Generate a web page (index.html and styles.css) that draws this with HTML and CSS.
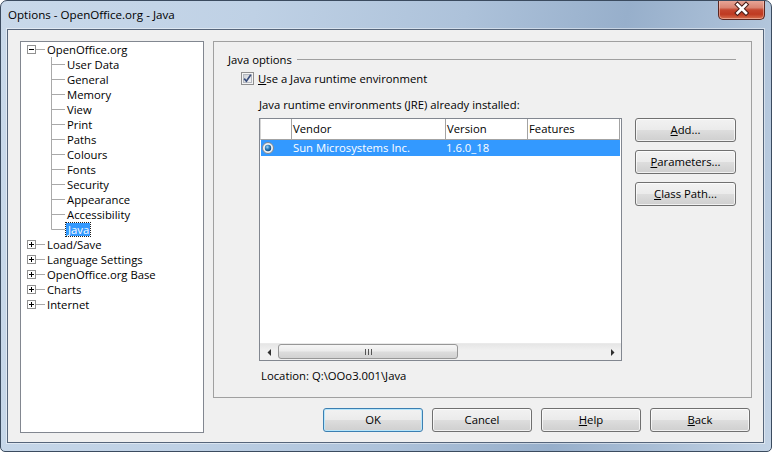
FILE: index.html
```html
<!DOCTYPE html>
<html lang="en">
<head>
<meta charset="UTF-8">
<title>Options - OpenOffice.org - Java</title>
<link rel="stylesheet" href="styles.css">
</head>
<body>

<div class="window">
    <div class="titlebar">
        <span class="title">Options - OpenOffice.org - Java</span>
        <div class="close">
            <svg width="45" height="18" viewBox="0 0 45 18">
                <path d="M18.5 4.5 L27 13 M27 4.5 L18.5 13" stroke="#4a1d18" stroke-width="4.6" stroke-linecap="square"/>
                <path d="M18.5 4.5 L27 13 M27 4.5 L18.5 13" stroke="#ffffff" stroke-width="2.6" stroke-linecap="square"/>
            </svg>
        </div>
    </div>

    <div class="client">
        <div class="tree">
            <!-- connector lines -->
            <svg class="tree-lines" width="182" height="390">
                <g stroke="#a9a9a9" stroke-width="1" fill="none">
                    <path d="M15 7.5 H24 M15 202.5 H24 M15 217.5 H24 M15 232.5 H24 M15 247.5 H24 M15 262.5 H24"/>
                    <path d="M30.5 15 V187.5"/>
                    <path d="M30.5 22.5 H44 M30.5 37.5 H44 M30.5 52.5 H44 M30.5 67.5 H44 M30.5 82.5 H44 M30.5 97.5 H44 M30.5 112.5 H44 M30.5 127.5 H44 M30.5 142.5 H44 M30.5 157.5 H44 M30.5 172.5 H44 M30.5 187.5 H44"/>
                </g>
            </svg>

            <div class="node top"><svg class="exp" width="9" height="9"><rect x=".5" y=".5" width="8" height="8" fill="#fff" stroke="#919191"/><path d="M2 4.5 H7" stroke="#000"/></svg><span>OpenOffice.org</span></div>
            <div class="node child">User Data</div>
            <div class="node child">General</div>
            <div class="node child">Memory</div>
            <div class="node child">View</div>
            <div class="node child">Print</div>
            <div class="node child">Paths</div>
            <div class="node child">Colours</div>
            <div class="node child">Fonts</div>
            <div class="node child">Security</div>
            <div class="node child">Appearance</div>
            <div class="node child">Accessibility</div>
            <div class="node child"><span class="selected">Java</span></div>
            <div class="node top"><svg class="exp" width="9" height="9"><rect x=".5" y=".5" width="8" height="8" fill="#fff" stroke="#919191"/><path d="M2 4.5 H7 M4.5 2 V7" stroke="#000"/></svg><span>Load/Save</span></div>
            <div class="node top"><svg class="exp" width="9" height="9"><rect x=".5" y=".5" width="8" height="8" fill="#fff" stroke="#919191"/><path d="M2 4.5 H7 M4.5 2 V7" stroke="#000"/></svg><span>Language Settings</span></div>
            <div class="node top"><svg class="exp" width="9" height="9"><rect x=".5" y=".5" width="8" height="8" fill="#fff" stroke="#919191"/><path d="M2 4.5 H7 M4.5 2 V7" stroke="#000"/></svg><span>OpenOffice.org Base</span></div>
            <div class="node top"><svg class="exp" width="9" height="9"><rect x=".5" y=".5" width="8" height="8" fill="#fff" stroke="#919191"/><path d="M2 4.5 H7 M4.5 2 V7" stroke="#000"/></svg><span>Charts</span></div>
            <div class="node top"><svg class="exp" width="9" height="9"><rect x=".5" y=".5" width="8" height="8" fill="#fff" stroke="#919191"/><path d="M2 4.5 H7 M4.5 2 V7" stroke="#000"/></svg><span>Internet</span></div>
        </div>

        <div class="main">
            <div class="page">
                <div class="group-head">
                    <span>Java options</span>
                    <div class="rule"></div>
                </div>

                <div class="check-row">
                    <svg width="13" height="13" viewBox="0 0 13 13">
                        <defs>
                            <linearGradient id="cbg" x1="0" y1="0" x2="1" y2="1">
                                <stop offset="0" stop-color="#cbcfd5"/>
                                <stop offset="1" stop-color="#f6f6f6"/>
                            </linearGradient>
                        </defs>
                        <rect x=".5" y=".5" width="12" height="12" fill="#f4f4f4" stroke="#8f8f8f"/>
                        <rect x="2.5" y="2.5" width="8" height="8" fill="url(#cbg)" stroke="#b4b8bf"/>
                        <path d="M3.2 6.6 L5.4 9.2 L9.8 2.8" stroke="#3b4f7d" stroke-width="1.7" fill="none"/>
                    </svg>
                    <span><u>U</u>se a Java runtime environment</span>
                </div>

                <div class="jre-label"><u>J</u>ava runtime environments (JRE) already installed:</div>

                <div class="jre-row">
                    <div class="jre-table">
                        <div class="thead">
                            <div class="th c1"></div>
                            <div class="th c2">Vendor</div>
                            <div class="th c3">Version</div>
                            <div class="th c4">Features</div>
                        </div>
                        <div class="tr sel">
                            <div class="td c1">
                                <svg width="12" height="12" viewBox="0 0 12 12">
                                    <defs>
                                        <radialGradient id="dot" cx=".4" cy=".35" r=".7">
                                            <stop offset="0" stop-color="#9fd6f7"/>
                                            <stop offset=".5" stop-color="#2b7fc0"/>
                                            <stop offset="1" stop-color="#0f3f6e"/>
                                        </radialGradient>
                                    </defs>
                                    <circle cx="6" cy="6" r="5.5" fill="#eef0f2" stroke="#7d8590"/>
                                    <circle cx="6" cy="6" r="3.2" fill="url(#dot)"/>
                                </svg>
                            </div>
                            <div class="td c2">Sun Microsystems Inc.</div>
                            <div class="td c3">1.6.0_18</div>
                            <div class="td c4"></div>
                        </div>
                        <div class="tbody-space"></div>
                        <div class="hscroll">
                            <div class="arrow"><svg width="4" height="7"><path d="M4 0 V7 L0.5 3.5 Z" fill="#303030"/></svg></div>
                            <div class="track">
                                <div class="thumb"><span class="grip"></span></div>
                            </div>
                            <div class="arrow"><svg width="4" height="7"><path d="M0 0 V7 L3.5 3.5 Z" fill="#303030"/></svg></div>
                        </div>
                    </div>

                    <div class="side-buttons">
                        <div class="btn"><u>A</u>dd...</div>
                        <div class="btn"><u>P</u>arameters...</div>
                        <div class="btn"><u>C</u>lass Path...</div>
                    </div>
                </div>

                <div class="location">Location: Q:\OOo3.001\Java</div>
            </div>

            <div class="buttons">
                <div class="btn default">OK</div>
                <div class="btn">Cancel</div>
                <div class="btn"><u>H</u>elp</div>
                <div class="btn"><u>B</u>ack</div>
            </div>
        </div>
    </div>
</div>

</body>
</html>
```

FILE: styles.css
```css
* {
    box-sizing: border-box;
}
body {
    margin: 0;
    font-family: "Open Sans", "Noto Sans", sans-serif;
    font-size: 11.3px;
    color: #000;
    background: #ffffff;
}
u {
    text-decoration: underline;
    text-underline-offset: 1px;
}

/* window frame */
.window {
    width: 772px;
    height: 452px;
    border: 1px solid #3b4b5f;
    border-radius: 7px 7px 5px 5px;
    background: linear-gradient(100deg, #c9d9ea 0%, #bfd1e5 30%, #adc2da 55%, #97afcb 74%, #a9bed6 86%, #c3d3e5 100%);
    display: flex;
    flex-direction: column;
    overflow: hidden;
}
.titlebar {
    height: 28px;
    display: flex;
    justify-content: space-between;
    align-items: flex-start;
}
.title {
    padding: 6px 0 0 7px;
    line-height: 16px;
    font-size: 11.6px;
}
.close {
    width: 47px;
    height: 20px;
    margin: -1px 6px 0 0;
    border: 1px solid #5a2620;
    border-top: none;
    border-radius: 0 0 5px 5px;
    background: linear-gradient(#e9a99b 0%, #d98472 40%, #c4462f 52%, #bf3a22 75%, #d7704f 100%);
    box-shadow: inset 0 0 0 1px rgba(255, 220, 210, 0.45);
}
.close svg {
    display: block;
}

.client {
    height: 414px;
    margin: 0 7px 8px 6px;
    border: 1px solid #56657a;
    box-shadow: 0 0 0 1px rgba(255, 255, 255, 0.45);
    background: #f0f0f0;
    padding: 11px 11px 9px 12px;
    display: flex;
    gap: 9px;
}

/* left tree */
.tree {
    width: 184px;
    background: #fff;
    border: 1px solid #828790;
    position: relative;
}
.tree-lines {
    position: absolute;
    top: 0;
    left: 0;
}
.node {
    height: 15px;
    line-height: 15px;
    display: flex;
    align-items: center;
    white-space: nowrap;
}
.node.top {
    padding-left: 6px;
}
.node.top .exp {
    margin-right: 11px;
    flex-shrink: 0;
}
.node.child {
    padding-left: 46px;
}
.selected {
    background: #3399ff;
    color: #fff;
    padding: 0 1px 0 2px;
    margin-left: -1px;
    line-height: 13px;
    outline: 1px dotted #202020;
}

/* right side */
.main {
    width: 539px;
    display: flex;
    flex-direction: column;
    gap: 10px;
}
.page {
    height: 357px;
    border: 1px solid #a0a0a0;
    padding: 10px 15px 0 14px;
    display: flex;
    flex-direction: column;
}
.group-head {
    display: flex;
    align-items: center;
    height: 15px;
    line-height: 15px;
}
.rule {
    flex: 1;
    height: 1px;
    background: #a0a0a0;
    margin-left: 5px;
}
.check-row {
    margin-top: 4px;
    height: 15px;
    line-height: 15px;
    padding-left: 13px;
    display: flex;
    align-items: center;
    gap: 4px;
}
.check-row svg {
    display: block;
}
.jre-label {
    margin-top: 11px;
    height: 15px;
    line-height: 15px;
    padding-left: 31px;
}
.jre-row {
    margin-top: 6px;
    padding-left: 31px;
    display: flex;
    gap: 13px;
}
.jre-table {
    width: 363px;
    height: 243px;
    border: 1px solid #828790;
    background: #fff;
    display: flex;
    flex-direction: column;
}
.thead {
    display: flex;
    height: 21px;
}
.th {
    border-right: 1px solid #a3a3a3;
    border-bottom: 1px solid #a3a3a3;
    line-height: 20px;
    padding-left: 1px;
    white-space: nowrap;
}
.th.c1 {
    border-left: 1px solid #d5d5d5;
}
.c1 { width: 32px; }
.c2 { width: 154px; }
.c3 { width: 82px; }
.c4 { width: 92px; }
.tr {
    display: flex;
    height: 16px;
    line-height: 16px;
    margin: 0 1px 0 1px;
}
.tr.sel {
    background: #3399ff;
    color: #fff;
}
.td {
    white-space: nowrap;
}
.td.c1 {
    width: 31px;
    padding-left: 1px;
    display: flex;
    align-items: center;
}
.td.c2 {
    padding-left: 1px;
}
.tbody-space {
    flex: 1;
}
.hscroll {
    height: 17px;
    display: flex;
    background: linear-gradient(#e6e6e6, #f0f0f0 40%, #f0f0f0);
    border-top: 1px solid #eaeaea;
}
.arrow {
    width: 17px;
    display: flex;
    align-items: center;
    justify-content: center;
}
.arrow svg {
    display: block;
}
.track {
    flex: 1;
    padding: 0 0 1px 1px;
}
.thumb {
    width: 180px;
    height: 15px;
    border: 1px solid #979797;
    border-radius: 3px;
    background: linear-gradient(#f6f6f6 0%, #ececec 45%, #dcdcdc 55%, #d2d2d2 100%);
    display: flex;
    align-items: center;
    justify-content: center;
}
.grip {
    width: 7px;
    height: 6px;
    background: linear-gradient(90deg, #555 0 1px, transparent 1px 3px, #555 3px 4px, transparent 4px 6px, #555 6px 7px);
}
.side-buttons {
    display: flex;
    flex-direction: column;
    gap: 8px;
}
.side-buttons .btn {
    width: 101px;
}
.location {
    margin-top: 7px;
    height: 15px;
    line-height: 15px;
    padding-left: 33px;
}

/* push buttons */
.btn {
    height: 24px;
    line-height: 22px;
    text-align: center;
    border: 1px solid #707070;
    border-radius: 3px;
    background: linear-gradient(#f2f2f2 0%, #ebebeb 48%, #dddddd 52%, #cfcfcf 100%);
    box-shadow: inset 0 0 0 1px rgba(255, 255, 255, 0.7);
    white-space: nowrap;
}
.btn.default {
    border-color: #3c7fb1;
    box-shadow: inset 0 0 0 1px #b7e6fb;
}
.buttons {
    display: flex;
    justify-content: flex-end;
    gap: 9px;
    padding-right: 2px;
}
.buttons .btn {
    width: 100px;
}
```
